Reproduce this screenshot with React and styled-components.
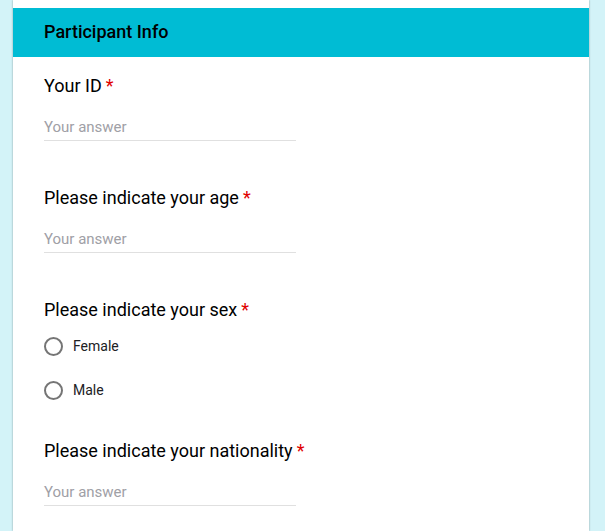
import React from "react";
import styled, { createGlobalStyle } from "styled-components";

const Global = createGlobalStyle`
  html, body { margin: 0; padding: 0; }
  body {
    background: #d3f3f8;
    font-family: Roboto, "Noto Sans", Arial, sans-serif;
    -webkit-font-smoothing: antialiased;
  }
`;

const Page = styled.div`
  padding-left: 13px;
  min-height: 531px;
  box-sizing: border-box;
`;

const Card = styled.section`
  width: 576px;
  background: #fff;
  padding-top: 8px;
  box-shadow: 0 0 2px rgba(0, 0, 0, 0.35);
  min-height: 531px;
  box-sizing: border-box;
`;

const Header = styled.header`
  height: 49px;
  background: #00bcd4;
  padding: 0 31px;
  font-size: 18px;
  line-height: 48px;
  font-weight: 500;
  color: #000;
`;

const Body = styled.div`
  padding: 17px 31px 0;
  display: flex;
  flex-direction: column;
  gap: 27px;
`;

const Question = styled.div`
  display: flex;
  flex-direction: column;
`;

const Title = styled.div`
  font-size: 18px;
  line-height: 24px;
  color: #000;
`;

const Required = styled.span`
  color: #e00000;
  margin-left: 4px;
`;

const TextAnswer = styled.div`
  margin-top: 19px;
  margin-bottom: 18px;
  width: 252px;
  padding-bottom: 3px;
  border-bottom: 1px solid #e0e0e0;
  font-size: 15px;
  line-height: 20px;
  color: #a0a0a6;
`;

const Options = styled.div`
  display: flex;
  flex-direction: column;
  margin-top: 2px;
`;

const Option = styled.label`
  display: flex;
  align-items: center;
  height: 44px;
  gap: 10px;
  font-size: 14px;
  color: #202124;
`;

const Radio = styled.span`
  width: 19px;
  height: 19px;
  box-sizing: border-box;
  border: 2px solid #757575;
  border-radius: 50%;
`;

const TextQuestion = ({ title }) => (
  <Question>
    <Title>
      {title}
      <Required>*</Required>
    </Title>
    <TextAnswer>Your answer</TextAnswer>
  </Question>
);

export default function App() {
  return (
    <>
      <Global />
      <Page>
        <Card>
          <Header>Participant Info</Header>
          <Body>
            <TextQuestion title="Your ID" />
            <TextQuestion title="Please indicate your age" />
            <Question>
              <Title>
                Please indicate your sex
                <Required>*</Required>
              </Title>
              <Options>
                {["Female", "Male"].map((o) => (
                  <Option key={o}>
                    <Radio />
                    {o}
                  </Option>
                ))}
              </Options>
            </Question>
            <TextQuestion title="Please indicate your nationality" />
          </Body>
        </Card>
      </Page>
    </>
  );
}
